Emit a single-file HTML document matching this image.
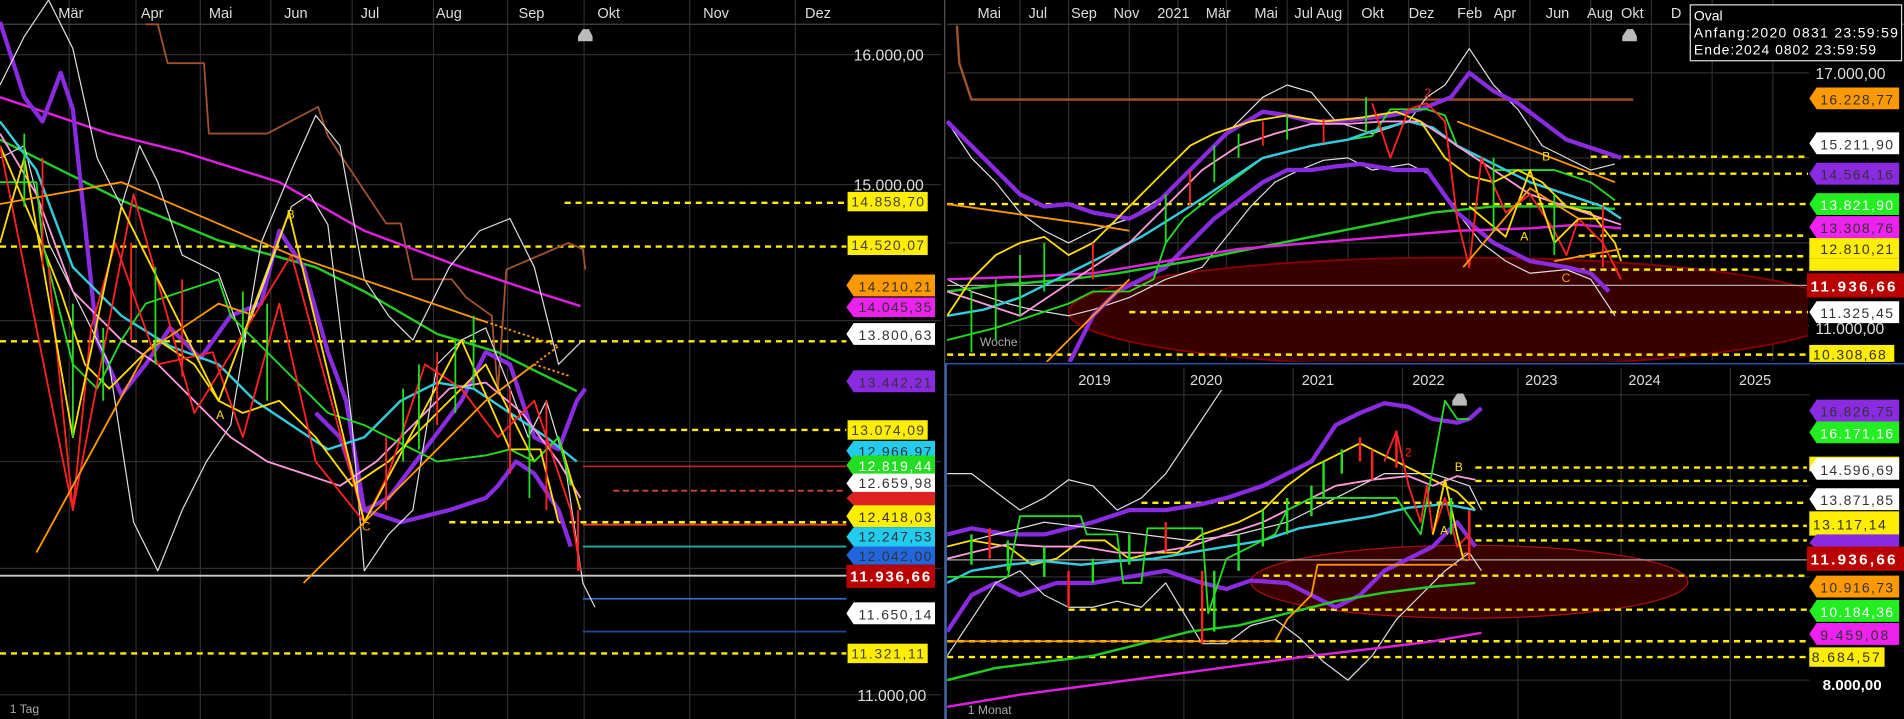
<!DOCTYPE html>
<html><head><meta charset="utf-8"><style>
html,body{margin:0;padding:0;background:#000;overflow:hidden}
svg{display:block}
text{font-family:"Liberation Sans",sans-serif}
</style></head><body>
<svg width="1904" height="719" viewBox="0 0 1568 592" preserveAspectRatio="none" xmlns="http://www.w3.org/2000/svg">
<rect width="1568" height="592" fill="#000"/>
<g stroke="#2e2e2e" stroke-width="1">
<line x1="57" y1="0" x2="57" y2="592"/><line x1="112" y1="0" x2="112" y2="592"/><line x1="165" y1="0" x2="165" y2="592"/><line x1="223" y1="0" x2="223" y2="592"/><line x1="290" y1="0" x2="290" y2="592"/><line x1="357" y1="0" x2="357" y2="592"/><line x1="418" y1="0" x2="418" y2="592"/><line x1="481" y1="0" x2="481" y2="592"/><line x1="568" y1="0" x2="568" y2="592"/><line x1="655" y1="0" x2="655" y2="592"/>
<line x1="0" y1="45" x2="775" y2="45"/><line x1="0" y1="152" x2="775" y2="152"/><line x1="0" y1="264" x2="775" y2="264"/><line x1="0" y1="380" x2="775" y2="380"/><line x1="0" y1="468" x2="775" y2="468"/><line x1="0" y1="572" x2="775" y2="572"/>
<line x1="840" y1="0" x2="840" y2="297"/><line x1="880" y1="0" x2="880" y2="297"/><line x1="930" y1="0" x2="930" y2="297"/><line x1="970" y1="0" x2="970" y2="297"/><line x1="1010" y1="0" x2="1010" y2="297"/><line x1="1060" y1="0" x2="1060" y2="297"/><line x1="1110" y1="0" x2="1110" y2="297"/><line x1="1160" y1="0" x2="1160" y2="297"/><line x1="1210" y1="0" x2="1210" y2="297"/><line x1="1260" y1="0" x2="1260" y2="297"/><line x1="1310" y1="0" x2="1310" y2="297"/><line x1="1360" y1="0" x2="1360" y2="297"/><line x1="1410" y1="0" x2="1410" y2="297"/><line x1="1460" y1="0" x2="1460" y2="297"/>
<line x1="780" y1="60" x2="1490" y2="60"/><line x1="780" y1="130" x2="1490" y2="130"/><line x1="780" y1="200" x2="1490" y2="200"/><line x1="780" y1="268" x2="1490" y2="268"/>
<line x1="880" y1="303" x2="880" y2="592"/><line x1="975" y1="303" x2="975" y2="592"/><line x1="1065" y1="303" x2="1065" y2="592"/><line x1="1155" y1="303" x2="1155" y2="592"/><line x1="1250" y1="303" x2="1250" y2="592"/><line x1="1335" y1="303" x2="1335" y2="592"/><line x1="1425" y1="303" x2="1425" y2="592"/>
<line x1="780" y1="325" x2="1490" y2="325"/><line x1="780" y1="400" x2="1490" y2="400"/><line x1="780" y1="475" x2="1490" y2="475"/><line x1="780" y1="560" x2="1490" y2="560"/>
</g>
<line x1="0" y1="20" x2="775" y2="20" stroke="#444"/>
<line x1="780" y1="20" x2="1568" y2="20" stroke="#444"/>
<!-- left header -->
<g fill="#ddd" font-size="12">
<text x="48" y="15">Mär</text><text x="116" y="15">Apr</text><text x="172" y="15">Mai</text><text x="234" y="15">Jun</text><text x="297" y="15">Jul</text><text x="359" y="15">Aug</text><text x="427" y="15">Sep</text><text x="492" y="15">Okt</text><text x="579" y="15">Nov</text><text x="663" y="15">Dez</text>
<text x="703" y="50" font-size="13">16.000,00</text><text x="703" y="157" font-size="13">15.000,00</text><text x="706" y="577" font-size="13">11.000,00</text>
<text x="8" y="587" font-size="10" fill="#aaa">1 Tag</text>
</g>
<polygon points="476,30 480,24 485,24 488,30 488,34 476,34" fill="#bbb"/>
<!-- left dashed levels -->
<g stroke="#ffee00" stroke-width="2" stroke-dasharray="5,4">
<line x1="465" y1="167" x2="697" y2="167"/><line x1="0" y1="203" x2="697" y2="203"/><line x1="0" y1="281" x2="697" y2="281"/><line x1="480" y1="354" x2="697" y2="354"/><line x1="370" y1="430" x2="697" y2="430"/><line x1="0" y1="538" x2="697" y2="538"/>
</g>
<g stroke-width="1.5">
<line x1="480" y1="384" x2="697" y2="384" stroke="#b22"/><line x1="505" y1="404" x2="697" y2="404" stroke="#c44" stroke-dasharray="5,3"/><line x1="480" y1="432" x2="697" y2="432" stroke="#d42"/><line x1="480" y1="450" x2="697" y2="450" stroke="#2aa"/><line x1="0" y1="474" x2="697" y2="474" stroke="#ccc"/><line x1="480" y1="493" x2="697" y2="493" stroke="#36c"/><line x1="480" y1="520" x2="697" y2="520" stroke="#249"/>
</g>
<!-- left chart lines -->
<g fill="none" stroke-linejoin="round">
<polyline stroke="#a0522d" stroke-width="1.5" points="120,20 130,20 138,52 168,52 172,110 220,110 262,88 270,112 318,184 330,184 340,230 372,230 384,245 405,260 410,322 417,222 468,200 480,205 482,222"/>
<polyline stroke="#e020e0" stroke-width="2" points="0,80 30,90 90,110 150,125 230,150 300,190 380,220 440,240 478,252"/>
<polyline stroke="#22cc22" stroke-width="2" points="0,115 40,135 100,165 180,198 260,220 300,240 360,275 410,290 440,305 475,322"/>
<polyline stroke="#8a2be2" stroke-width="3.5" points="0,18 20,80 35,100 50,60 60,90 80,280 100,325 120,300 140,270 165,295 190,260 215,250 230,190 250,220 270,290 285,330 300,420 320,410 350,370 380,330 400,290 420,300 440,360 460,370 475,330 482,320"/>
<polyline stroke="#8a2be2" stroke-width="3.5" points="260,340 280,360 300,420 330,430 370,420 400,410 410,400 425,380 440,390 460,420 470,450"/>
<polyline stroke="#ddd" stroke-width="1" points="0,70 20,30 40,0 60,40 80,130 100,170 115,120 130,150 150,210 180,225 200,280 215,240 240,170 255,160 270,185 290,350 300,470 320,440 340,420 360,300 380,280 400,270 420,320 435,360 450,330 465,380 480,480 490,500"/>
<polyline stroke="#ddd" stroke-width="1" points="0,130 20,120 40,200 60,240 90,300 110,430 130,470 150,420 170,380 190,350 215,200 240,140 260,95 280,120 300,230 320,260 340,280 370,220 395,190 420,180 440,220 460,300 480,280"/>
<polyline stroke="#33ccdd" stroke-width="2" points="0,100 30,140 60,220 100,260 140,285 180,300 210,330 240,350 270,370 300,360 330,330 360,315 390,320 420,340 450,360 475,380"/>
<polyline stroke="#ff99dd" stroke-width="1.5" points="0,110 30,160 60,240 100,280 130,300 160,330 190,360 220,380 250,390 280,400 310,380 340,350 370,320 400,315 430,340 460,380 478,410"/>
<polyline stroke="#ffdd00" stroke-width="1.5" points="0,120 30,190 50,240 70,300 90,320 110,300 130,280 160,300 180,330 200,340 230,330 260,360 290,400 320,380 350,350 380,320 400,300 420,340 440,380 460,360 478,420"/>
<polyline stroke="#22dd22" stroke-width="1.5" points="0,150 30,150 35,200 60,300 80,320 100,280 120,250 150,240 180,230 190,260 210,280 240,310 270,340 300,350 320,360 340,370 360,380 400,375 420,370 440,380 460,360 470,400"/>
<polyline stroke="#ff2222" stroke-width="1.5" points="0,120 60,420 110,160 160,340 240,210 300,430"/>
<polyline stroke="#ff2222" stroke-width="1.5" points="40,220 60,420 75,270 95,200 130,300 175,290 200,360 230,250 260,380 300,430 320,390 350,300 380,320 410,360 440,330 470,420 478,470"/>
<polyline stroke="#ffdd00" stroke-width="1.5" points="0,200 20,130 60,360 100,170 180,330 238,175 300,430 380,280 420,370 445,370 460,430"/>
<polyline stroke="#ff9900" stroke-width="1.5" points="30,455 120,290 180,250 210,260"/>
<polyline stroke="#ff9900" stroke-width="1.5" points="0,168 100,150 240,210 400,265"/>
<polyline stroke="#ff9900" stroke-width="1.5" points="250,480 400,330 440,300"/>
<polyline stroke="#ff9900" stroke-width="1.5" stroke-dasharray="2,2" points="400,265 460,285 440,300 470,310"/>
</g>
<g stroke-width="1.5">
<line x1="20" y1="110" x2="20" y2="170" stroke="#22dd22"/><line x1="35" y1="130" x2="35" y2="220" stroke="#ff2222"/><line x1="60" y1="250" x2="60" y2="360" stroke="#22dd22"/><line x1="85" y1="270" x2="85" y2="330" stroke="#22dd22"/><line x1="108" y1="200" x2="108" y2="280" stroke="#ff2222"/><line x1="128" y1="220" x2="128" y2="300" stroke="#22dd22"/><line x1="150" y1="230" x2="150" y2="310" stroke="#ff2222"/><line x1="200" y1="240" x2="200" y2="290" stroke="#22dd22"/><line x1="220" y1="250" x2="220" y2="330" stroke="#22dd22"/><line x1="318" y1="360" x2="318" y2="420" stroke="#ff2222"/><line x1="332" y1="320" x2="332" y2="380" stroke="#22dd22"/><line x1="345" y1="300" x2="345" y2="370" stroke="#22dd22"/><line x1="360" y1="290" x2="360" y2="350" stroke="#ff2222"/><line x1="375" y1="280" x2="375" y2="340" stroke="#22dd22"/><line x1="390" y1="260" x2="390" y2="320" stroke="#22dd22"/><line x1="420" y1="320" x2="420" y2="390" stroke="#ff2222"/><line x1="436" y1="350" x2="436" y2="410" stroke="#22dd22"/><line x1="450" y1="330" x2="450" y2="420" stroke="#ff2222"/><line x1="476" y1="420" x2="476" y2="470" stroke="#ff2222"/>
</g>
<g font-size="10" fill="#ffdd00"><text x="236" y="180">B</text><text x="178" y="345">A</text><text x="298" y="437" fill="#ff9900">C</text></g>
<!-- left labels -->
<g font-size="11.5">
<rect x="698" y="158" width="66" height="16" fill="#ffee00"/><text x="701" y="170" fill="#444" textLength="60">14.858,70</text>
<rect x="698" y="194" width="66" height="16" fill="#ffee00"/><text x="701" y="206" fill="#444" textLength="60">14.520,07</text>
<polygon points="697,235 703,226 770,226 770,244 703,244" fill="#ff9900"/><text x="707" y="240" fill="#333" textLength="60">14.210,21</text>
<polygon points="697,253 703,245 770,245 770,261 703,261" fill="#ee22ee"/><text x="707" y="257" fill="#333" textLength="60">14.045,35</text>
<polygon points="697,275 703,266 770,266 770,284 703,284" fill="#fff"/><text x="707" y="280" fill="#333" textLength="60">13.800,63</text>
<polygon points="697,314 703,305 770,305 770,323 703,323" fill="#8a2be2"/><text x="707" y="319" fill="#333" textLength="60">13.442,21</text>
<rect x="698" y="346" width="66" height="16" fill="#ffee00"/><text x="701" y="358" fill="#444" textLength="60">13.074,09</text>
<polygon points="697,371 703,363 770,363 770,380 703,380" fill="#22ccee"/><text x="707" y="376" fill="#333" textLength="60">12.966,97</text>
<polygon points="697,383 703,375 770,375 770,392 703,392" fill="#22dd22"/><text x="707" y="388" fill="#fff" textLength="60">12.819,44</text>
<polygon points="697,398 703,390 770,390 770,406 703,406" fill="#fff"/><text x="707" y="402" fill="#333" textLength="60">12.659,98</text>
<polygon points="697,410 703,405 770,405 770,416 703,416" fill="#dd2222"/>
<polygon points="697,425 703,416 770,416 770,434 703,434" fill="#ffee00"/><text x="707" y="430" fill="#333" textLength="60">12.418,03</text>
<polygon points="697,442 703,434 770,434 770,450 703,450" fill="#22ccee"/><text x="707" y="446" fill="#333" textLength="60">12.247,53</text>
<polygon points="697,457 703,450 770,450 770,465 703,465" fill="#2266dd"/><text x="707" y="462" fill="#333" textLength="60">12.042,00</text>
<rect x="697" y="465" width="73" height="19" fill="#bb0000"/><text x="700" y="479" fill="#fff" font-weight="bold" font-size="12.5" textLength="66">11.936,66</text>
<polygon points="697,505 703,496 770,496 770,514 703,514" fill="#fff"/><text x="707" y="510" fill="#333" textLength="60">11.650,14</text>
<rect x="698" y="530" width="66" height="16" fill="#ffee00"/><text x="701" y="542" fill="#444" textLength="60">11.321,11</text>
</g>
<!-- divider -->
<line x1="778" y1="0" x2="778" y2="592" stroke="#555"/>
<!-- top right -->
<g fill="#ddd" font-size="12">
<text x="805" y="15">Mai</text><text x="847" y="15">Jul</text><text x="882" y="15">Sep</text><text x="917" y="15">Nov</text><text x="953" y="15">2021</text><text x="993" y="15">Mär</text><text x="1033" y="15">Mai</text><text x="1066" y="15">Jul</text><text x="1084" y="15">Aug</text><text x="1121" y="15">Okt</text><text x="1160" y="15">Dez</text><text x="1200" y="15">Feb</text><text x="1230" y="15">Apr</text><text x="1273" y="15">Jun</text><text x="1307" y="15">Aug</text><text x="1335" y="15">Okt</text><text x="1376" y="15">D</text>
<text x="1495" y="65" font-size="13">17.000,00</text><text x="1495" y="275" font-size="13">11.000,00</text>
<text x="807" y="285" font-size="10" fill="#aaa">Woche</text>
</g>
<polygon points="1336,30 1340,24 1345,24 1348,30 1348,34 1336,34" fill="#bbb"/>
<clipPath id="ct"><rect x="779" y="21" width="710" height="277"/></clipPath>
<g clip-path="url(#ct)">
<ellipse cx="1200" cy="257" rx="320" ry="45" fill="#3a0000" stroke="#8a0000" stroke-width="1.5"/>
<g stroke="#ffee00" stroke-width="2" stroke-dasharray="5,4">
<line x1="1310" y1="129" x2="1490" y2="129"/><line x1="1290" y1="143" x2="1490" y2="143"/><line x1="780" y1="168" x2="1490" y2="168"/><line x1="1300" y1="194" x2="1490" y2="194"/><line x1="1300" y1="211" x2="1490" y2="211"/><line x1="1300" y1="222" x2="1490" y2="222"/><line x1="930" y1="257" x2="1490" y2="257"/><line x1="780" y1="292" x2="1490" y2="292"/>
</g>
<line x1="780" y1="235" x2="1490" y2="235" stroke="#aaa"/>
<g fill="none" stroke-linejoin="round">
<polyline stroke="#a0522d" stroke-width="2" points="788,20 790,52 800,82 1345,82"/>
<polyline stroke="#ddd" stroke-width="1" points="780,100 800,130 820,150 840,175 860,190 880,200 900,190 930,180 960,160 990,130 1020,100 1040,80 1060,70 1080,76 1100,100 1130,110 1160,100 1175,80 1190,70 1210,40 1230,70 1250,90 1270,120 1290,130 1310,140 1330,135"/>
<polyline stroke="#ddd" stroke-width="1" points="780,230 800,240 830,250 850,255 880,260 900,255 930,245 960,230 990,220 1010,195 1030,170 1050,150 1070,140 1090,132 1110,130 1130,140 1160,135 1180,145 1200,175 1220,200 1240,215 1260,225 1290,222 1310,230 1330,260"/>
<polyline stroke="#8a2be2" stroke-width="3.5" points="780,100 800,120 820,140 840,160 860,170 880,168 900,175 930,180 950,170 970,150 990,130 1010,110 1040,92 1060,95 1080,100 1100,100 1120,98 1145,95 1170,90 1195,80 1210,60 1230,75 1250,85 1270,100 1290,115 1320,125 1335,130"/>
<polyline stroke="#8a2be2" stroke-width="3.5" points="880,300 900,260 920,240 940,230 960,220 980,200 1000,180 1020,165 1040,150 1060,140 1080,140 1100,137 1120,135 1150,140 1175,140 1200,175 1230,200 1260,215 1290,220 1310,225 1325,240"/>
<polyline stroke="#22dd22" stroke-width="1.5" points="780,280 820,270 850,260 880,250 900,240 930,240 950,230 960,200 975,180 1000,160 1040,130 1080,120 1110,115 1130,112 1145,90 1175,90 1190,95 1200,120 1230,140 1280,140 1310,150 1330,165"/>
<polyline stroke="#22cc22" stroke-width="2" points="780,240 820,235 880,230 920,225 980,215 1030,205 1080,195 1130,185 1180,175 1230,170 1280,170 1330,172"/>
<polyline stroke="#e020e0" stroke-width="2" points="780,230 840,228 900,225 960,215 1020,205 1080,200 1140,195 1200,190 1260,188 1300,185 1335,188"/>
<polyline stroke="#33ccdd" stroke-width="2" points="780,260 810,255 840,245 870,230 900,215 940,195 980,170 1010,150 1040,130 1080,120 1110,115 1130,108 1160,100 1180,105 1200,120 1230,135 1260,150 1290,160 1320,170 1335,180"/>
<polyline stroke="#ff99dd" stroke-width="1.5" points="780,240 810,250 840,260 870,240 900,220 930,200 960,170 990,140 1020,120 1050,110 1080,102 1110,102 1140,100 1170,100 1200,120 1230,140 1260,160 1290,170 1320,180 1335,185"/>
<polyline stroke="#ffdd00" stroke-width="1.5" points="780,260 800,230 820,210 840,200 860,195 880,210 900,200 920,180 940,160 960,140 980,120 1000,110 1030,100 1060,95 1090,100 1120,97 1150,92 1170,100 1190,130 1210,145 1230,150 1250,140 1270,150 1290,170 1310,175 1330,200 1335,215"/>
<polyline stroke="#ff2222" stroke-width="1.5" points="1130,85 1145,130 1160,90 1175,85 1190,100 1200,180 1210,220 1220,130 1240,175 1260,160 1280,190 1290,210 1300,180 1320,200 1335,230"/>
<polyline stroke="#ffdd00" stroke-width="1.5" points="1210,170 1240,195 1260,140 1280,200 1300,180 1320,180"/>
<polyline stroke="#ff9900" stroke-width="1.5" points="780,168 900,185 930,190"/>
<polyline stroke="#ff9900" stroke-width="1.5" points="860,300 930,230"/>
<polyline stroke="#ff9900" stroke-width="1.5" points="1205,220 1260,155 1300,180"/>
<polyline stroke="#ff9900" stroke-width="1.5" points="1280,215 1335,205"/>
<polyline stroke="#ff9900" stroke-width="1.5" points="1200,100 1330,150"/>
</g>
<g stroke-width="1.5">
<line x1="800" y1="240" x2="800" y2="290" stroke="#22dd22"/><line x1="820" y1="230" x2="820" y2="280" stroke="#22dd22"/><line x1="840" y1="210" x2="840" y2="260" stroke="#22dd22"/><line x1="860" y1="200" x2="860" y2="240" stroke="#22dd22"/><line x1="900" y1="200" x2="900" y2="230" stroke="#ff2222"/><line x1="960" y1="160" x2="960" y2="200" stroke="#22dd22"/><line x1="980" y1="140" x2="980" y2="170" stroke="#ff2222"/><line x1="1000" y1="120" x2="1000" y2="150" stroke="#22dd22"/><line x1="1020" y1="110" x2="1020" y2="130" stroke="#22dd22"/><line x1="1040" y1="100" x2="1040" y2="120" stroke="#ff2222"/><line x1="1060" y1="95" x2="1060" y2="115" stroke="#22dd22"/><line x1="1090" y1="98" x2="1090" y2="118" stroke="#ff2222"/><line x1="1125" y1="80" x2="1125" y2="110" stroke="#22dd22"/><line x1="1230" y1="130" x2="1230" y2="190" stroke="#22dd22"/><line x1="1280" y1="160" x2="1280" y2="210" stroke="#22dd22"/><line x1="1320" y1="170" x2="1320" y2="220" stroke="#ff2222"/>
</g>
<g font-size="10"><text x="1270" y="132" fill="#ffdd00">B</text><text x="1252" y="198" fill="#ffdd00">A</text><text x="1286" y="232" fill="#ff9900">C</text><text x="1173" y="80" fill="#ff2222">2</text></g>
</g>
<!-- tooltip -->
<rect x="1392" y="4" width="174" height="46" fill="#000" stroke="#ddd"/>
<g font-size="11.5" fill="#fff"><text x="1395" y="17">Oval</text><text x="1395" y="31" textLength="168">Anfang:2020 0831 23:59:59</text><text x="1395" y="45" textLength="150">Ende:2024 0802 23:59:59</text></g>
<!-- top right labels -->
<g font-size="11.5">
<polygon points="1490,81 1496,72 1564,72 1564,90 1496,90" fill="#ff9900"/><text x="1499" y="86" fill="#333" textLength="60">16.228,77</text>
<polygon points="1490,118 1496,109 1564,109 1564,127 1496,127" fill="#fff"/><text x="1499" y="123" fill="#333" textLength="60">15.211,90</text>
<polygon points="1490,143 1496,134 1564,134 1564,152 1496,152" fill="#8a2be2"/><text x="1499" y="148" fill="#333" textLength="60">14.564,16</text>
<polygon points="1490,168 1496,159 1564,159 1564,177 1496,177" fill="#22ee22"/><text x="1499" y="173" fill="#fff" textLength="60">13.821,90</text>
<polygon points="1490,187 1496,178 1564,178 1564,196 1496,196" fill="#ee22ee"/><text x="1499" y="192" fill="#333" textLength="60">13.308,76</text>
<rect x="1490" y="196" width="74" height="17" fill="#ffee00"/><text x="1499" y="209" fill="#333" textLength="60">12.810,21</text>
<rect x="1490" y="213" width="74" height="10" fill="#ffee00"/>
<rect x="1488" y="225" width="80" height="20" fill="#bb0000"/><text x="1491" y="240" fill="#fff" font-weight="bold" font-size="12.5" textLength="70">11.936,66</text>
<polygon points="1490,257 1496,248 1564,248 1564,266 1496,266" fill="#fff"/><text x="1499" y="262" fill="#333" textLength="60">11.325,45</text>
<rect x="1490" y="284" width="70" height="14" fill="#ffee00"/><text x="1493" y="296" fill="#333" textLength="60">10.308,68</text>
</g>
<!-- bottom right panel -->
<rect x="779" y="299" width="789" height="1" fill="#36c"/>
<line x1="779" y1="299" x2="779" y2="592" stroke="#36c" stroke-width="1.5"/>
<g fill="#ddd" font-size="12"><text x="888" y="317">2019</text><text x="980" y="317">2020</text><text x="1072" y="317">2021</text><text x="1163" y="317">2022</text><text x="1256" y="317">2023</text><text x="1341" y="317">2024</text><text x="1432" y="317">2025</text>
<text x="1501" y="568" font-size="12.5" font-weight="bold" fill="#fff">8.000,00</text>
<text x="797" y="588" font-size="10" fill="#aaa">1 Monat</text></g>
<polygon points="1196,330 1200,324 1205,324 1208,330 1208,334 1196,334" fill="#bbb"/>
<clipPath id="cb"><rect x="780" y="321" width="708" height="271"/></clipPath>
<g clip-path="url(#cb)">
<ellipse cx="1210" cy="479" rx="180" ry="30" fill="#3a0000" stroke="#aa1111" stroke-width="1"/>
<g stroke="#ffee00" stroke-width="2" stroke-dasharray="5,4">
<line x1="1215" y1="385" x2="1490" y2="385"/><line x1="1215" y1="396" x2="1490" y2="396"/><line x1="940" y1="414" x2="1490" y2="414"/><line x1="1215" y1="433" x2="1490" y2="433"/><line x1="1215" y1="445" x2="1490" y2="445"/><line x1="1040" y1="474" x2="1490" y2="474"/><line x1="880" y1="502" x2="1490" y2="502"/><line x1="780" y1="528" x2="1490" y2="528"/><line x1="780" y1="541" x2="1490" y2="541"/>
</g>
<line x1="780" y1="461" x2="1490" y2="461" stroke="#aaa"/>
<g fill="none" stroke-linejoin="round">
<polyline stroke="#8a2be2" stroke-width="3.5" points="780,440 800,435 830,440 860,440 880,435 900,430 930,420 960,420 990,415 1010,410 1040,400 1060,390 1080,380 1100,350 1120,340 1140,332 1160,335 1180,345 1200,348 1210,345 1220,336"/>
<polyline stroke="#8a2be2" stroke-width="3.5" points="780,520 800,490 820,480 840,490 870,480 900,480 930,475 960,470 990,480 1010,485 1030,478 1060,480 1080,490 1100,500 1120,490 1140,470 1160,460 1180,450 1200,430 1215,450"/>
<polyline stroke="#ddd" stroke-width="1" points="780,390 800,390 820,405 840,420 860,410 880,395 900,400 920,420 940,410 960,390 980,360 1000,330 1020,300"/>
<polyline stroke="#ddd" stroke-width="1" points="780,540 800,510 820,480 840,470 860,490 880,500 900,500 920,495 940,500 960,480 990,530 1010,530 1030,515 1050,510 1070,525 1090,545 1110,560 1130,540 1150,510 1170,490 1190,470 1210,455 1220,470"/>
<polyline stroke="#ddd" stroke-width="1" points="780,450 820,440 860,430 900,435 940,440 980,445 1020,440 1060,430 1100,410 1140,390 1180,390 1210,400 1220,420"/>
<polyline stroke="#ffdd00" stroke-width="1.5" points="780,450 800,445 830,450 850,465 870,460 890,445 910,445 930,460 950,455 970,455 990,440 1020,430 1040,420 1060,400 1080,385 1100,375 1120,365 1140,375 1160,385 1180,395 1200,405 1215,420"/>
<polyline stroke="#ff99dd" stroke-width="1.5" points="780,460 800,455 830,448 860,450 890,450 920,455 950,455 980,450 1010,440 1040,430 1070,415 1100,400 1130,395 1160,392 1180,400 1200,392 1215,395"/>
<polyline stroke="#33ccdd" stroke-width="2" points="780,480 800,470 830,465 860,462 890,465 920,462 950,460 980,455 1010,450 1040,445 1070,435 1100,430 1130,425 1160,418 1190,415 1215,420"/>
<polyline stroke="#22dd22" stroke-width="1.5" points="780,475 830,475 840,425 890,425 895,440 920,440 925,480 940,480 945,435 990,435 995,505 1010,460 1030,450 1050,440 1060,420 1080,410 1150,410 1170,440 1190,330 1200,345 1210,345"/>
<polyline stroke="#22cc22" stroke-width="2" points="780,560 820,550 860,545 900,540 940,530 980,520 1020,515 1060,505 1100,495 1140,488 1180,483 1215,480"/>
<polyline stroke="#e020e0" stroke-width="2" points="780,582 840,572 900,564 960,556 1020,548 1080,540 1140,533 1180,528 1220,521"/>
<polyline stroke="#ff9900" stroke-width="1.5" points="780,528 1050,528 1060,510 1080,490 1085,465 1200,465"/>
<polyline stroke="#ff2222" stroke-width="1.5" points="1140,380 1150,355 1160,400 1170,430 1175,400 1180,440 1190,410 1200,450 1210,440"/>
<polyline stroke="#ffdd00" stroke-width="1.5" points="1180,440 1190,395 1200,440 1205,460"/>
</g>
<g stroke-width="2">
<line x1="800" y1="440" x2="800" y2="465" stroke="#22dd22"/><line x1="815" y1="435" x2="815" y2="460" stroke="#ff2222"/><line x1="830" y1="445" x2="830" y2="470" stroke="#22dd22"/><line x1="860" y1="450" x2="860" y2="475" stroke="#22dd22"/><line x1="880" y1="470" x2="880" y2="500" stroke="#ff2222"/><line x1="900" y1="460" x2="900" y2="480" stroke="#22dd22"/><line x1="930" y1="440" x2="930" y2="465" stroke="#22dd22"/><line x1="960" y1="430" x2="960" y2="455" stroke="#ff2222"/><line x1="990" y1="470" x2="990" y2="530" stroke="#ff2222"/><line x1="1000" y1="470" x2="1000" y2="520" stroke="#22dd22"/><line x1="1020" y1="440" x2="1020" y2="470" stroke="#22dd22"/><line x1="1040" y1="420" x2="1040" y2="450" stroke="#22dd22"/><line x1="1060" y1="410" x2="1060" y2="440" stroke="#22dd22"/><line x1="1080" y1="400" x2="1080" y2="425" stroke="#22dd22"/><line x1="1090" y1="380" x2="1090" y2="410" stroke="#22dd22"/><line x1="1105" y1="370" x2="1105" y2="390" stroke="#22dd22"/><line x1="1120" y1="360" x2="1120" y2="380" stroke="#ff2222"/><line x1="1130" y1="370" x2="1130" y2="395" stroke="#ff2222"/><line x1="1150" y1="355" x2="1150" y2="385" stroke="#ff2222"/><line x1="1195" y1="410" x2="1195" y2="440" stroke="#22dd22"/><line x1="1210" y1="420" x2="1210" y2="460" stroke="#ff2222"/>
</g>
<g font-size="10"><text x="1198" y="388" fill="#ffdd00">B</text><text x="1186" y="440" fill="#ffdd00">A</text><text x="1204" y="462" fill="#ff9900">C</text><text x="1157" y="376" fill="#ff2222">2</text></g>
</g>
<g font-size="11.5">
<polygon points="1490,338 1496,329 1564,329 1564,347 1496,347" fill="#8a2be2"/><text x="1499" y="343" fill="#333" textLength="60">16.826,75</text>
<polygon points="1490,356 1496,347 1564,347 1564,365 1496,365" fill="#22ee22"/><text x="1499" y="361" fill="#fff" textLength="60">16.171,16</text>
<rect x="1490" y="376" width="74" height="12" fill="#ffee00"/>
<polygon points="1490,386 1496,377 1564,377 1564,395 1496,395" fill="#fff"/><text x="1499" y="391" fill="#333" textLength="60">14.596,69</text>
<polygon points="1490,411 1496,402 1564,402 1564,420 1496,420" fill="#fff"/><text x="1499" y="416" fill="#333" textLength="60">13.871,85</text>
<rect x="1490" y="421" width="74" height="20" fill="#ffee00"/><text x="1493" y="436" fill="#333" textLength="60">13.117,14</text>
<polygon points="1490,447 1496,440 1564,440 1564,452 1496,452" fill="#8a2be2"/>
<rect x="1488" y="450" width="80" height="20" fill="#bb0000"/><text x="1491" y="465" fill="#fff" font-weight="bold" font-size="12.5" textLength="70">11.936,66</text>
<polygon points="1490,483 1496,474 1564,474 1564,492 1496,492" fill="#ff9900"/><text x="1499" y="488" fill="#333" textLength="60">10.916,73</text>
<polygon points="1490,503 1496,494 1564,494 1564,512 1496,512" fill="#22ee22"/><text x="1499" y="508" fill="#fff" textLength="60">10.184,36</text>
<polygon points="1490,522 1496,513 1564,513 1564,531 1496,531" fill="#ee22ee"/><text x="1499" y="527" fill="#333" textLength="56">9.459,08</text>
<rect x="1490" y="533" width="62" height="16" fill="#ffee00"/><text x="1492" y="545" fill="#333" textLength="56">8.684,57</text>
</g>
</svg>
</body></html>
